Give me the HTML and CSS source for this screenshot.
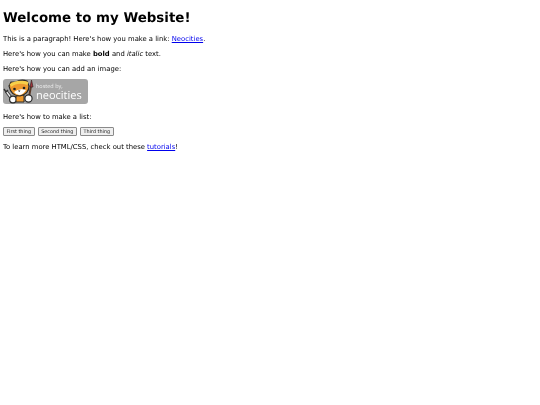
FILE: index.html
```html
<!DOCTYPE html>
<html lang="en">
<head>
    <meta charset="UTF-8">
    <title>My Website</title>
    <link rel="stylesheet" href="styles.css">
</head>
<body>
    <h1>Welcome to my Website!</h1>

    <p>This is a paragraph! Here's how you make a link: <a href="#">Neocities</a>.</p>

    <p>Here's how you can make <strong>bold</strong> and <em>italic</em> text.</p>

    <p>Here's how you can add an image:</p>

    <!-- Hosted by Neocities badge -->
    <div class="badge">
        <svg class="cat" viewBox="0 0 32 25" width="32" height="25">
            <!-- paintbrush -->
            <path d="M26 18 L28 7" stroke="#5a3a28" stroke-width="2" fill="none"/>
            <path d="M27 8 L28.500 1 L30 8 Z" fill="#a8323c" stroke="#3a2a24" stroke-width="0.700"/>
            <circle cx="25.500" cy="19.500" r="3.600" fill="#fff" stroke="#2a2a2a" stroke-width="1.200"/>
            <!-- wrench -->
            <path d="M3 12 L9 20" stroke="#333" stroke-width="3" fill="none"/>
            <path d="M3 12 L9 20" stroke="#eee" stroke-width="1.300" fill="none"/>
            <path d="M1 10 L3 13 L5 11" stroke="#333" stroke-width="1.400" fill="none"/>
            <circle cx="10" cy="20.500" r="3.400" fill="#fff" stroke="#2a2a2a" stroke-width="1.200"/>
            <!-- body -->
            <path d="M13 17 L21 16 L21 23 L13 23 Z" fill="#ee9a2e" stroke="#2a2a2a" stroke-width="1"/>
            <!-- head with hard hat -->
            <path d="M6 7 L8 3 L13 3 Q18 0 24 2 L26 7 Q26 15 17 17 Q8 17 6 7 Z" fill="#ee9a2e" stroke="#2a2a2a" stroke-width="1.200"/>
            <path d="M7.500 6.500 Q14 1 25 4.500" stroke="#f6cf4a" stroke-width="3" fill="none"/>
            <path d="M11 13 Q16 9 23 11 Q20 16 16 16 Q13 16 11 13 Z" fill="#fff"/>
            <circle cx="11.500" cy="10" r="1.300" fill="#222"/>
            <circle cx="21" cy="9" r="1.300" fill="#222"/>
            <path d="M15 11.500 L17.500 11.500 L16.200 13 Z" fill="#222"/>
        </svg>
        <div class="badge-text">
            <span class="hosted">hosted by,</span>
            <span class="neo">neocities</span>
        </div>
    </div>

    <p>Here's how to make a list:</p>

    <div class="list">
        <button>First thing</button>
        <button>Second thing</button>
        <button>Third thing</button>
    </div>

    <p>To learn more HTML/CSS, check out these <a href="#">tutorials</a>!</p>
</body>
</html>
```

FILE: styles.css
```css
body {
    margin: 0;
    padding: 11px 3px 0;
    font-family: "DejaVu Sans", sans-serif;
    font-size: 6.820px;
    line-height: 8px;
    color: #000;
    background-color: #fff;
    text-rendering: geometricPrecision;
    filter: blur(0.25px);
}

h1 {
    margin: 0 0 7px;
    font-size: 13.400px;
    line-height: 16px;
    font-weight: bold;
}

p {
    margin: 0 0 6px;
    padding-top: 1px;
}

a {
    color: #0000ee;
}

/* Neocities badge */
.badge {
    display: flex;
    width: 85px;
    height: 25px;
    margin-bottom: 8px;
    background-color: #a6a6a6;
    border-radius: 3px;
}

.badge-text {
    display: flex;
    flex-direction: column;
    margin-left: 1px;
    color: #fff;
}

.hosted {
    font-family: "Open Sans", sans-serif;
    font-size: 5.500px;
    line-height: 7px;
    margin-top: 4px;
    color: #eee;
}

.neo {
    font-family: "Open Sans", sans-serif;
    font-size: 11px;
    line-height: 12px;
}

/* Row of buttons */
.list {
    display: flex;
    gap: 3px;
    margin-bottom: 6px;
}

button {
    height: 9px;
    padding: 0 2.600px;
    font-family: "DejaVu Sans", sans-serif;
    font-size: 4.900px;
    line-height: 7px;
    color: #222;
    background-color: #efefef;
    border: 0.700px solid #8a8a8a;
    border-radius: 1px;
}
```
